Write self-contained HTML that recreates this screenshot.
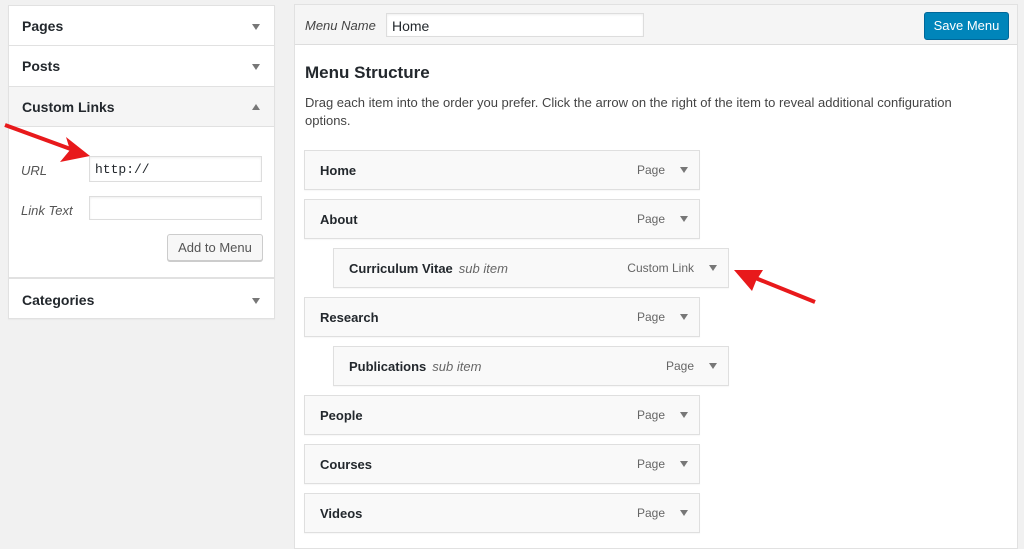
<!DOCTYPE html>
<html><head><meta charset="utf-8"><style>
*{box-sizing:border-box;margin:0;padding:0}
body{width:1024px;height:544px;background:#f1f1f1;font-family:"Liberation Sans",sans-serif;color:#23282d;position:relative;overflow:hidden;font-size:13px}
.abs{position:absolute}
.lp{left:8px;width:267px;background:#fff;border:1px solid #e1e1e1;box-shadow:0 1px 1px rgba(0,0,0,.04)}
.lh{position:absolute;left:13px;font-weight:bold;font-size:14px}
.tri{position:absolute;width:0;height:0;border-left:4px solid transparent;border-right:4px solid transparent;border-top:6px solid #777}
.up{border-top:0;border-bottom:6px solid #777}
.inp{position:absolute;background:#fff;border:1px solid #ddd;box-shadow:inset 0 1px 2px rgba(0,0,0,.07)}
.item{position:absolute;height:40px;width:396px;background:#f9f9f9;border:1px solid #dfdfdf;box-shadow:0 1px 1px rgba(0,0,0,.04)}
.item b{position:absolute;left:15px;top:12px;font-size:13px}
.item i{font-weight:normal;color:#666;margin-left:6px}
.item .t{position:absolute;right:34px;top:12px;color:#666;font-size:12px}
.item .tri{right:11px;top:16px}
</style></head><body>
<div class="abs lp" style="top:5px;height:41px"><span class="lh" style="top:12px">Pages</span><div class="tri" style="right:14px;top:18px"></div></div>
<div class="abs lp" style="top:46px;height:41px;border-top:0"><span class="lh" style="top:12px">Posts</span><div class="tri" style="right:14px;top:18px"></div></div>
<div class="abs lp" style="top:87px;height:191px;border-top:0">
 <div style="height:40px;background:#f5f5f5;border-bottom:1px solid #e1e1e1"></div>
 <span class="lh" style="top:12px">Custom Links</span><div class="tri up" style="right:14px;top:17px"></div>
 <i class="abs" style="left:12px;top:76px;color:#555">URL</i>
 <div class="inp" style="left:80px;top:69px;width:173px;height:26px"><span style="position:absolute;left:5px;top:5px;font-family:'Liberation Mono',monospace;font-size:13px">http://</span></div>
 <i class="abs" style="left:12px;top:116px;color:#555">Link Text</i>
 <div class="inp" style="left:80px;top:109px;width:173px;height:24px"></div>
 <div class="abs" style="left:158px;top:147px;width:96px;height:27px;background:#f7f7f7;border:1px solid #ccc;border-radius:3px;box-shadow:0 1px 0 #ccc;font-size:13px;color:#555;text-align:center;line-height:25px">Add to Menu</div>
</div>
<div class="abs lp" style="top:278px;height:41px"><span class="lh" style="top:13px">Categories</span><div class="tri" style="right:14px;top:19px"></div></div>

<div class="abs" style="left:294px;top:4px;width:724px;height:545px;background:#fff;border:1px solid #e1e1e1">
 <div style="height:40px;background:#f5f5f5;border-bottom:1px solid #ddd;position:relative">
  <i class="abs" style="left:10px;top:13px;color:#444">Menu Name</i>
  <div class="inp" style="left:91px;top:8px;width:258px;height:24px"><span style="position:absolute;left:5px;top:4px;font-size:14px">Home</span></div>
  <div class="abs" style="left:629px;top:7px;width:85px;height:28px;background:#0085ba;border:1px solid #006799;border-radius:3px;color:#fff;text-align:center;line-height:26px;font-size:13px">Save Menu</div>
 </div>
 <div class="abs" style="left:10px;top:58px;font-size:17px;font-weight:bold">Menu Structure</div>
 <div class="abs" style="left:10px;top:89px;width:680px;line-height:18px;color:#444">Drag each item into the order you prefer. Click the arrow on the right of the item to reveal additional configuration options.</div>
</div>

<div class="item" style="left:304px;top:150px"><b>Home</b><span class="t">Page</span><div class="tri"></div></div>
<div class="item" style="left:304px;top:199px"><b>About</b><span class="t">Page</span><div class="tri"></div></div>
<div class="item" style="left:333px;top:248px"><b>Curriculum Vitae<i>sub item</i></b><span class="t">Custom Link</span><div class="tri"></div></div>
<div class="item" style="left:304px;top:297px"><b>Research</b><span class="t">Page</span><div class="tri"></div></div>
<div class="item" style="left:333px;top:346px"><b>Publications<i>sub item</i></b><span class="t">Page</span><div class="tri"></div></div>
<div class="item" style="left:304px;top:395px"><b>People</b><span class="t">Page</span><div class="tri"></div></div>
<div class="item" style="left:304px;top:444px"><b>Courses</b><span class="t">Page</span><div class="tri"></div></div>
<div class="item" style="left:304px;top:493px"><b>Videos</b><span class="t">Page</span><div class="tri"></div></div>

<svg class="abs" style="left:0;top:0" width="1024" height="544">
 <line x1="5" y1="125" x2="76" y2="151" stroke="#e8191b" stroke-width="4"/>
 <polygon points="90,156 66,137 70,150 60,162" fill="#e8191b"/>
 <line x1="815" y1="302" x2="748" y2="275" stroke="#e8191b" stroke-width="4"/>
 <polygon points="734,270 763,270 756,281 752,291" fill="#e8191b"/>
</svg>
</body></html>
